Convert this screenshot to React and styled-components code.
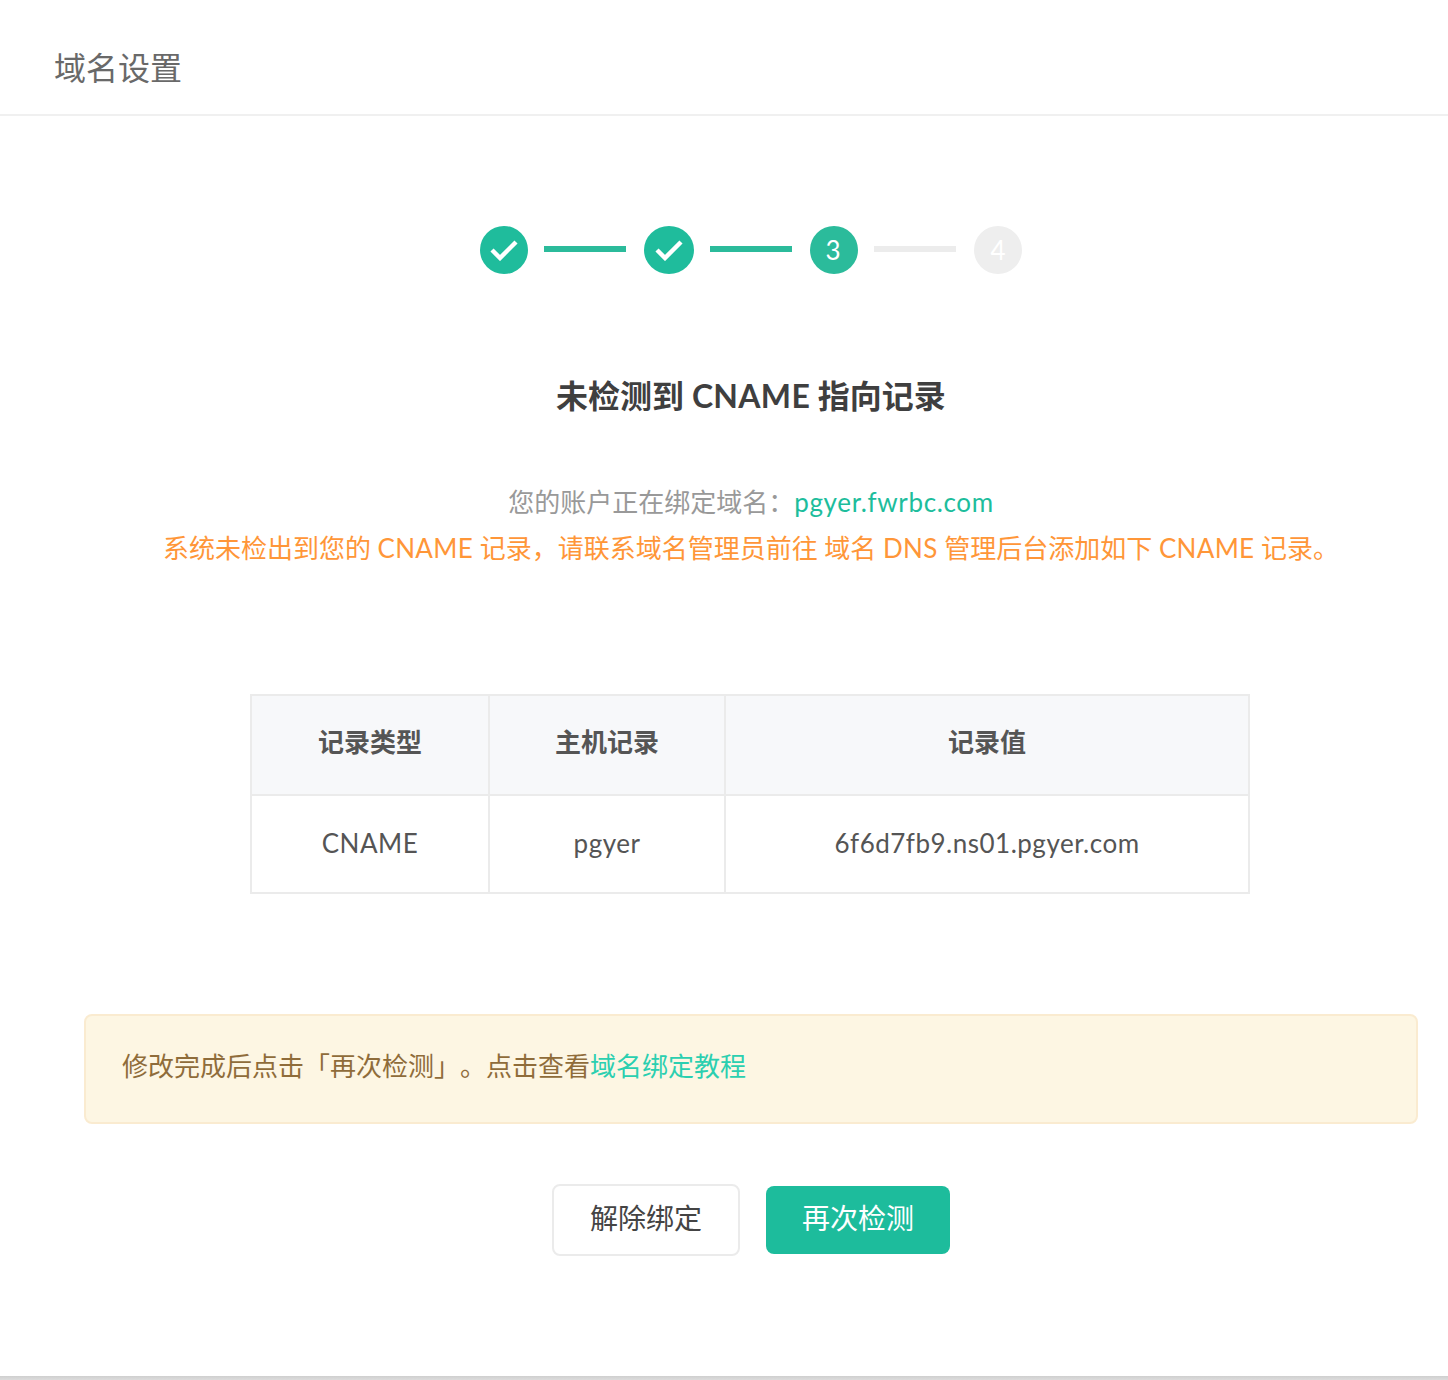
import React from "react";
import styled, { createGlobalStyle } from "styled-components";

const FONT = `Lato, "Noto Sans CJK SC", sans-serif`;

const Global = createGlobalStyle`
  html, body { margin: 0; padding: 0; background: #fff; }
  body { font-family: ${FONT}; text-spacing-trim: space-all; }
  * { box-sizing: border-box; }
`;

const Page = styled.div`
  height: 1380px;
  display: flex;
  flex-direction: column;
  overflow: hidden;
`;
const Header = styled.header`
  height: 116px;
  flex: none;
  padding: 18px 0 0 54px;
  display: flex;
  align-items: center;
  border-bottom: 2px solid #f0f0f0;
  font-size: 32px;
  font-weight: 400;
  color: #696969;
`;
const Content = styled.main`
  width: 1334px;
  margin-left: 84px;
  display: flex;
  flex-direction: column;
  align-items: center;
`;
const Stepper = styled.div`
  margin-top: 110px;
  display: flex;
  align-items: center;
`;
const Circle = styled.div`
  width: ${(p) => (p.$wide ? "50px" : "48px")};
  height: 48px;
  padding-right: ${(p) => (p.$number ? "2px" : "0")};
  border-radius: 50%;
  background: ${(p) =>
    p.$pending ? "#eeeeee" : p.$number ? "#2bbb9b" : "#1fbc9c"};
  color: #fff;
  font-size: 26px;
  display: flex;
  align-items: center;
  justify-content: center;
`;
const Line = styled.div`
  width: 82px;
  height: 6px;
  margin: -2px 18px 0 16px;
  background: ${(p) => (p.$pending ? "#ececec" : "#2bbb9b")};
`;
const Heading = styled.h1`
  margin: 100px 0 0;
  font-size: 32px;
  line-height: 44px;
  font-weight: 700;
  color: #3f3f3f;
`;
const Latin = styled.span`
  letter-spacing: ${(p) => p.$track || "0.3px"};
`;
const Notes = styled.div`
  margin-top: 61px;
  text-align: center;
  font-size: 26px;
  line-height: 46px;
  font-weight: 400;
`;
const Grey = styled.div`
  color: #999;
`;
const Link = styled.span`
  color: ${(p) => (p.$light ? "#2bcfb0" : "#1dbd9c")};
`;
const Orange = styled.div`
  color: #ff9638;
`;
const Table = styled.table`
  margin: 123px 2px 0 0;
  width: 1000px;
  table-layout: fixed;
  border-collapse: collapse;
  border: 2px solid #ebebeb;
  font-size: 26px;
  color: #555;
`;
const Th = styled.th`
  height: 100px;
  padding: 0 0 10px;
  background: #f7f8fa;
  border: 2px solid #ebebeb;
  font-weight: 700;
  width: ${(p) => p.$w};
`;
const Td = styled.td`
  height: 98px;
  padding: 0 0 2px;
  text-align: center;
  border: 2px solid #ebebeb;
  letter-spacing: 0.5px;
`;
const Alert = styled.div`
  margin-top: 120px;
  width: 100%;
  height: 110px;
  padding: 0 36px 10px;
  display: flex;
  align-items: center;
  background: #fdf6e3;
  border: 2px solid #faebd0;
  border-radius: 8px;
  font-size: 26px;
  color: #8f6c3a;
`;
const Actions = styled.div`
  margin-top: 60px;
  display: flex;
  align-items: center;
  gap: 26px;
`;
const Button = styled.button`
  height: ${(p) => (p.$primary ? "68px" : "72px")};
  width: ${(p) => (p.$primary ? "184px" : "188px")};
  padding: 0 0 6px;
  font: 400 28px ${FONT};
  color: ${(p) => (p.$primary ? "#fff" : "#444")};
  background: ${(p) => (p.$primary ? "#1dbc9c" : "#fff")};
  border: ${(p) => (p.$primary ? "none" : "2px solid #ebebeb")};
  border-radius: 8px;
`;
const BottomEdge = styled.div`
  margin-top: auto;
  height: 4px;
  flex: none;
  background: linear-gradient(#cfcfcf, #dcdcdc);
`;

const Check = () => (
  <svg width="28" height="22" viewBox="0 0 28 22" fill="none" stroke="#fff" strokeWidth="4.4">
    <path d="M2 11l8 8L26 3" />
  </svg>
);

export default function App() {
  return (
    <Page>
      <Global />
      <Header>域名设置</Header>
      <Content>
        <Stepper>
          <Circle><Check /></Circle>
          <Line />
          <Circle $wide><Check /></Circle>
          <Line />
          <Circle $number>3</Circle>
          <Line $pending />
          <Circle $pending>4</Circle>
        </Stepper>
        <Heading>未检测到 <Latin>CNAME</Latin> 指向记录</Heading>
        <Notes>
          <Grey>您的账户正在绑定域名：<Link><Latin $track="0.65px">pgyer.fwrbc.com</Latin></Link></Grey>
          <Orange>系统未检出到您的 <Latin>CNAME</Latin> 记录，请联系域名管理员前往 域名 <Latin>DNS</Latin> 管理后台添加如下 <Latin>CNAME</Latin> 记录。</Orange>
        </Notes>
        <Table>
          <thead>
            <tr>
              <Th $w="238px">记录类型</Th>
              <Th $w="236px">主机记录</Th>
              <Th>记录值</Th>
            </tr>
          </thead>
          <tbody>
            <tr>
              <Td>CNAME</Td>
              <Td>pgyer</Td>
              <Td>6f6d7fb9.ns01.pgyer.com</Td>
            </tr>
          </tbody>
        </Table>
        <Alert>
          <span>修改完成后点击「再次检测」。点击查看<Link $light>域名绑定教程</Link></span>
        </Alert>
        <Actions>
          <Button>解除绑定</Button>
          <Button $primary>再次检测</Button>
        </Actions>
      </Content>
      <BottomEdge />
    </Page>
  );
}
